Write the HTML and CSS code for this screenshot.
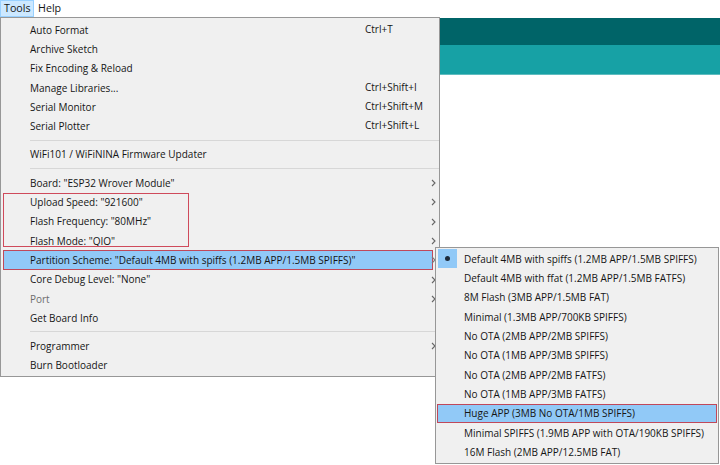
FILE: index.html
```html
<!DOCTYPE html>
<html>
<head>
<meta charset="utf-8">
<link rel="stylesheet" href="styles.css">
</head>
<body>
<div class="window">
  <div class="menubar">
    <span class="mb-item active">Tools</span>
    <span class="mb-item">Help</span>
  </div>
  <div class="app">
    <div class="hdr-dark"></div>
    <div class="hdr-light"></div>
  </div>

  <div class="menu main-menu">
    <div class="row"><span class="label">Auto Format</span><span class="sc">Ctrl+T</span></div>
    <div class="row"><span class="label">Archive Sketch</span></div>
    <div class="row"><span class="label">Fix Encoding &amp; Reload</span></div>
    <div class="row"><span class="label">Manage Libraries...</span><span class="sc">Ctrl+Shift+I</span></div>
    <div class="row"><span class="label">Serial Monitor</span><span class="sc">Ctrl+Shift+M</span></div>
    <div class="row"><span class="label">Serial Plotter</span><span class="sc">Ctrl+Shift+L</span></div>
    <div class="sep"></div>
    <div class="row"><span class="label">WiFi101 / WiFiNINA Firmware Updater</span></div>
    <div class="sep"></div>
    <div class="row sub"><span class="label">Board: "ESP32 Wrover Module"</span><svg class="arr" viewBox="0 0 5 8"><path d="M1 1 L4 4 L1 7"/></svg></div>
    <div class="group">
      <div class="row sub"><span class="label">Upload Speed: "921600"</span><svg class="arr" viewBox="0 0 5 8"><path d="M1 1 L4 4 L1 7"/></svg></div>
      <div class="row sub"><span class="label">Flash Frequency: "80MHz"</span><svg class="arr" viewBox="0 0 5 8"><path d="M1 1 L4 4 L1 7"/></svg></div>
      <div class="row sub"><span class="label">Flash Mode: "QIO"</span><svg class="arr" viewBox="0 0 5 8"><path d="M1 1 L4 4 L1 7"/></svg></div>
    </div>
    <div class="row sub hl"><span class="label">Partition Scheme: "Default 4MB with spiffs (1.2MB APP/1.5MB SPIFFS)"</span><svg class="arr" viewBox="0 0 5 8"><path d="M1 1 L4 4 L1 7"/></svg></div>
    <div class="row sub"><span class="label">Core Debug Level: "None"</span><svg class="arr" viewBox="0 0 5 8"><path d="M1 1 L4 4 L1 7"/></svg></div>
    <div class="row sub disabled"><span class="label">Port</span><svg class="arr" viewBox="0 0 5 8"><path d="M1 1 L4 4 L1 7"/></svg></div>
    <div class="row"><span class="label">Get Board Info</span></div>
    <div class="sep"></div>
    <div class="row sub"><span class="label">Programmer</span><svg class="arr" viewBox="0 0 5 8"><path d="M1 1 L4 4 L1 7"/></svg></div>
    <div class="row"><span class="label">Burn Bootloader</span></div>
  </div>

  <div class="menu submenu">
    <div class="srow checked"><span class="check"><span class="dot"></span></span><span class="label">Default 4MB with spiffs (1.2MB APP/1.5MB SPIFFS)</span></div>
    <div class="srow"><span class="check"></span><span class="label">Default 4MB with ffat (1.2MB APP/1.5MB FATFS)</span></div>
    <div class="srow"><span class="check"></span><span class="label">8M Flash (3MB APP/1.5MB FAT)</span></div>
    <div class="srow"><span class="check"></span><span class="label">Minimal (1.3MB APP/700KB SPIFFS)</span></div>
    <div class="srow"><span class="check"></span><span class="label">No OTA (2MB APP/2MB SPIFFS)</span></div>
    <div class="srow"><span class="check"></span><span class="label">No OTA (1MB APP/3MB SPIFFS)</span></div>
    <div class="srow"><span class="check"></span><span class="label">No OTA (2MB APP/2MB FATFS)</span></div>
    <div class="srow"><span class="check"></span><span class="label">No OTA (1MB APP/3MB FATFS)</span></div>
    <div class="srow hl"><span class="check"></span><span class="label">Huge APP (3MB No OTA/1MB SPIFFS)</span></div>
    <div class="srow"><span class="check"></span><span class="label">Minimal SPIFFS (1.9MB APP with OTA/190KB SPIFFS)</span></div>
    <div class="srow"><span class="check"></span><span class="label">16M Flash (2MB APP/12.5MB FAT)</span></div>
  </div>
</div>
</body>
</html>
```

FILE: styles.css
```css
* { box-sizing: border-box; }
html, body { margin: 0; padding: 0; background: #fff; }
body {
  font-family: "Open Sans", "Noto Sans", sans-serif;
  font-size: 10px;
  color: #151515;
  white-space: nowrap;
}
.window {
  position: relative;
  width: 720px;
  height: 465px;
  overflow: hidden;
  background: #fff;
}
.menubar {
  display: flex;
  height: 17px;
  background: #fff;
  font-size: 10.7px;
}
.mb-item {
  height: 17px;
  line-height: 15px;
  padding: 0 3px 0 3px;
  border: 1px solid transparent;
  color: #151515;
}
.mb-item.active {
  background: #cce8ff;
  border-color: #99d1ff;
  width: 34px;
}
.app {
  display: flex;
  flex-direction: column;
  padding-top: 1px;
}
.hdr-dark { height: 27px; background: #006468; }
.hdr-light { height: 30px; background: #17a1a5; border-bottom: 1px solid #5fbcbf; }

.menu {
  position: absolute;
  background: #f0f0f0;
  border: 1px solid #979797;
  display: flex;
  flex-direction: column;
}
.main-menu {
  left: 0;
  top: 17px;
  width: 440px;
  height: 360px;
  padding: 2px 0 1px 0;
}
.row {
  position: relative;
  height: 19.3px;
  display: flex;
  align-items: center;
  padding-left: 27px;
  margin: 0 6px 0 2px;
  flex: none;
}
.row .label { flex: none; }
.row .sc {
  position: absolute;
  left: 362px;
  top: 0;
  line-height: 19.3px;
}
.row .arr {
  position: absolute;
  left: 428px;
  top: 6px;
  width: 5px;
  height: 8px;
  fill: none;
  stroke: #666;
  stroke-width: 1.1;
}
.row.disabled { color: #6d6d6d; }
.row.hl {
  background: #91c9f7;
  outline: 1px solid #c0485a;
  outline-offset: -1px;
}
.row.hl .arr { stroke: #7a7a7a; }
.sep {
  height: 9px;
  flex: none;
  display: flex;
  align-items: center;
  margin-left: 29px;
}
.sep::before {
  content: "";
  display: block;
  width: 100%;
  height: 1px;
  background: #d7d7d7;
}
.group { position: relative; flex: none; }
.group::after {
  content: "";
  position: absolute;
  left: 2px;
  top: 0.6px;
  width: 184px;
  bottom: 3px;
  border: 1px solid #cf4a5b;
  pointer-events: none;
}

.submenu {
  left: 435px;
  top: 247px;
  width: 284px;
  height: 217px;
  padding: 1px 0;
}
.srow {
  height: 19.35px;
  display: flex;
  align-items: center;
  margin: 0 1px;
  flex: none;
}
.srow .check {
  width: 19px;
  height: 19px;
  margin-left: 1px;
  margin-right: 7px;
  display: flex;
  align-items: center;
  justify-content: center;
  flex: none;
}
.srow.checked .check { background: #91c9f7; }
.srow .dot {
  width: 5px;
  height: 5px;
  border-radius: 50%;
  background: #1c2a3a;
}
.srow.hl {
  background: #91c9f7;
  outline: 1px solid #c0485a;
  outline-offset: -1px;
}
```
